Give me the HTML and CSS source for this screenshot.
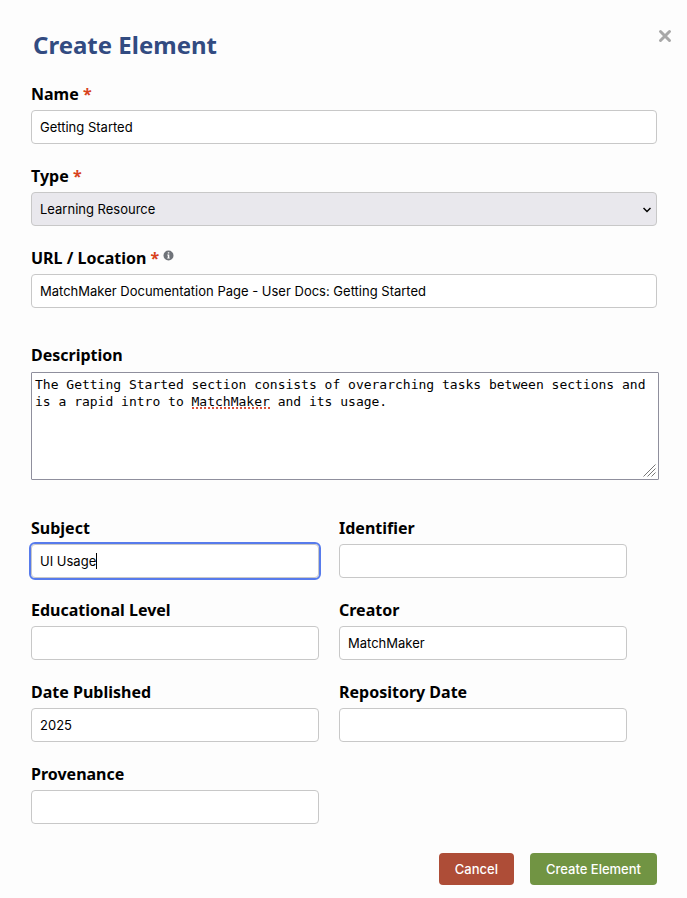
FILE: index.html
```html
<!DOCTYPE html>
<html lang="en">
<head>
<meta charset="utf-8">
<meta name="viewport" content="width=device-width, initial-scale=1">
<title>Create Element</title>
<link rel="stylesheet" href="styles.css">
</head>
<body>
<main class="dialog">
  <header class="dialog-header">
    <h1>Create Element</h1>
    <button class="close" type="button" aria-label="Close">
      <svg viewBox="0 0 14 14" width="14" height="14" aria-hidden="true"><path d="M2.5 2.5l9 9M11.5 2.5l-9 9"/></svg>
    </button>
  </header>
  <form class="form">
    <div class="field">
      <label for="name">Name <span class="required">*</span></label>
      <input id="name" type="text" value="Getting Started">
    </div>
    <div class="field">
      <label for="type">Type <span class="required">*</span></label>
      <div class="select-wrap">
        <select id="type"><option>Learning Resource</option></select>
        <svg class="chevron" viewBox="0 0 8 6" width="8" height="6" aria-hidden="true"><path d="M.5 1l3.5 3.5L7.500 1"/></svg>
      </div>
    </div>
    <div class="field">
      <label for="url">URL / Location <span class="required">*</span>
        <svg class="info" viewBox="0 0 11 11" width="11" height="11" aria-hidden="true"><circle cx="5.5" cy="5.500" r="5"/><path d="M4.800 2.200h1.500v1.400H4.800zM4.300 4.500h2v3.200h.5v.9H4.200v-.9h.6V5.400h-.5z"/></svg>
      </label>
      <input id="url" type="text" value="MatchMaker Documentation Page - User Docs: Getting Started">
    </div>
    <div class="field description">
      <label for="description">Description</label>
      <div class="textarea-wrap">
        <textarea id="description" spellcheck="false">The Getting Started section consists of overarching tasks between sections and is a rapid intro to MatchMaker and its usage.</textarea>
        <span class="spelling"></span>
        <svg class="grip" viewBox="0 0 13 13" width="13" height="13" aria-hidden="true"><path d="M.5 12.500l12-12M4.500 12.500l8-8M8.500 12.500l4-4"/></svg>
      </div>
    </div>
    <div class="details">
      <div class="field">
        <label for="subject">Subject</label>
        <div class="input-wrap">
          <input id="subject" class="active" type="text" value="UI Usage">
          <span class="caret"></span>
        </div>
      </div>
      <div class="field">
        <label for="identifier">Identifier</label>
        <input id="identifier" type="text">
      </div>
      <div class="field">
        <label for="level">Educational Level</label>
        <input id="level" type="text">
      </div>
      <div class="field">
        <label for="creator">Creator</label>
        <input id="creator" type="text" value="MatchMaker">
      </div>
      <div class="field">
        <label for="published">Date Published</label>
        <input id="published" type="text" value="2025">
      </div>
      <div class="field">
        <label for="repository">Repository Date</label>
        <input id="repository" type="text">
      </div>
      <div class="field">
        <label for="provenance">Provenance</label>
        <input id="provenance" type="text">
      </div>
    </div>
    <footer class="actions">
      <button class="button cancel" type="button">Cancel</button>
      <button class="button create" type="submit">Create Element</button>
    </footer>
  </form>
</main>
</body>
</html>
```

FILE: styles.css
```css
* {
  box-sizing: border-box;
}

body {
  margin: 0;
  background: #fdfdfd;
  color: #000;
  font: 13px/20px Inter, sans-serif;
}

.dialog {
  padding: 28px 30px 13px 31px;
}

.dialog-header {
  display: flex;
  justify-content: space-between;
  align-items: flex-start;
  margin: 0 -16px 20px 2px;
}

h1 {
  margin: 0;
  color: #324b81;
  font: bold 24px/34px "Noto Sans", sans-serif;
}

.close {
  display: flex;
  padding: 1px;
  border: 0;
  background: none;
}

.close path {
  fill: none;
  stroke: #a8a8a8;
  stroke-width: 3;
  stroke-linecap: round;
}

.form {
  display: flex;
  flex-direction: column;
  gap: 20px;
}

.field {
  display: flex;
  flex-direction: column;
  gap: 4px;
  min-width: 0;
}

label {
  font: bold 16px/24px "Noto Sans", sans-serif;
}

.required {
  color: #d8421c;
}

.info {
  vertical-align: 3px;
  fill: #6f7379;
}

.info path {
  fill: #fff;
}

input,
select {
  width: 100%;
  height: 34px;
  padding: 0 8px;
  border: 1px solid #c8c8c8;
  border-radius: 4px;
  background: #fff;
  color: #000;
  font: 13px/20px Inter, sans-serif;
}

input.active,
input:focus {
  outline: 2px solid #577bec;
  outline-offset: 0;
}

.select-wrap,
.input-wrap,
.textarea-wrap {
  position: relative;
  display: flex;
}

select {
  appearance: none;
  background: #e9e8ed;
}

.chevron {
  position: absolute;
  top: 15px;
  right: 6px;
  fill: none;
  stroke: #000;
  stroke-width: 1.5;
  pointer-events: none;
}

.caret {
  position: absolute;
  top: 9px;
  left: 65px;
  width: 1px;
  height: 16px;
  background: #000;
}

.description {
  margin: 15px 0 16px;
}

.textarea-wrap {
  margin-right: -2px;
  font: 13px/17px "DejaVu Sans Mono", monospace;
}

textarea {
  width: 100%;
  height: 108px;
  margin-top: 1px;
  padding: 3px;
  border: 1px solid #8f8f9d;
  border-radius: 1px;
  background: #fff;
  color: #000;
  font: inherit;
  resize: none;
}

.spelling {
  position: absolute;
  top: 36px;
  left: calc(4px + 20ch);
  width: 10ch;
  height: 2px;
  background: repeating-linear-gradient(90deg, #d9513b 0 2px, transparent 2px 4px);
}

.grip {
  position: absolute;
  right: 3px;
  bottom: 3px;
  fill: none;
  stroke: #777;
}

.details {
  display: grid;
  grid-template-columns: 1fr 1fr;
  gap: 20px;
  padding-right: 30px;
}

.actions {
  display: flex;
  justify-content: flex-end;
  gap: 16px;
  padding-top: 9px;
}

.button {
  height: 32px;
  padding: 0 16px;
  border: 0;
  border-radius: 4px;
  color: #fff;
  font: 500 13px/20px Inter, sans-serif;
}

.cancel {
  background: #ae4d37;
}

.create {
  background: #719443;
}
```
